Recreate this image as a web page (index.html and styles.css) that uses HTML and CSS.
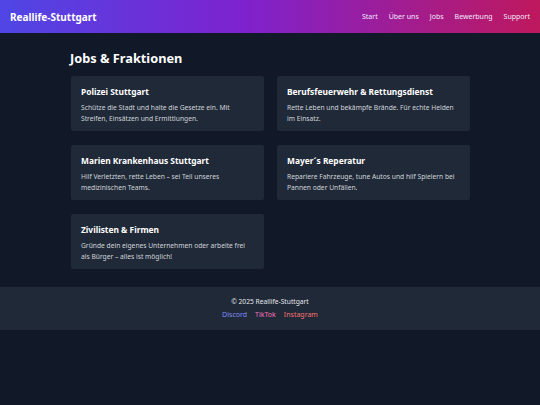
FILE: index.html
```html
<!DOCTYPE html>
<html lang="de">
<head>
<meta charset="utf-8">
<title>Reallife-Stuttgart</title>
<link rel="stylesheet" href="styles.css">
</head>
<body>
<header class="topbar">
  <div class="brand">Reallife-Stuttgart</div>
  <nav class="nav">
    <a href="#">Start</a>
    <a href="#">Über uns</a>
    <a href="#">Jobs</a>
    <a href="#">Bewerbung</a>
    <a href="#">Support</a>
  </nav>
</header>
<main class="container">
  <h1 class="title">Jobs &amp; Fraktionen</h1>
  <div class="grid">
    <div class="card">
      <h2>Polizei Stuttgart</h2>
      <p>Schütze die Stadt und halte die Gesetze ein. Mit Streifen, Einsätzen und Ermittlungen.</p>
    </div>
    <div class="card">
      <h2>Berufsfeuerwehr &amp; Rettungsdienst</h2>
      <p>Rette Leben und bekämpfe Brände. Für echte Helden im Einsatz.</p>
    </div>
    <div class="card">
      <h2>Marien Krankenhaus Stuttgart</h2>
      <p>Hilf Verletzten, rette Leben – sei Teil unseres medizinischen Teams.</p>
    </div>
    <div class="card">
      <h2>Mayer´s Reperatur</h2>
      <p>Repariere Fahrzeuge, tune Autos und hilf Spielern bei Pannen oder Unfällen.</p>
    </div>
    <div class="card">
      <h2>Zivilisten &amp; Firmen</h2>
      <p>Gründe dein eigenes Unternehmen oder arbeite frei als Bürger – alles ist möglich!</p>
    </div>
  </div>
</main>
<footer class="footer">
  <p class="copy">© 2025 Reallife-Stuttgart</p>
  <div class="links">
    <a href="#" class="discord">Discord</a>
    <a href="#" class="tiktok">TikTok</a>
    <a href="#" class="insta">Instagram</a>
  </div>
</footer>
</body>
</html>
```
FILE: styles.css
```css
* { box-sizing: border-box; }
html, body {
  margin: 0;
  padding: 0;
  background: #111827;
  color: #e5e7eb;
  font-family: "Noto Sans", "Open Sans", sans-serif;
}
a { text-decoration: none; }
.topbar {
  height: 33px;
  display: flex;
  align-items: center;
  justify-content: space-between;
  padding: 0 10px;
  background: linear-gradient(90deg, #4f46e5 0%, #7e22ce 45%, #be185d 100%);
}
.brand {
  color: #fff;
  font-weight: 700;
  font-size: 10px;
}
.nav {
  display: flex;
  gap: 11px;
}
.nav a {
  color: #f3e8ff;
  font-size: 7px;
}
.container {
  width: 400px;
  margin: 0 auto;
  padding: 16px 0 18px;
}
.title {
  margin: 0 0 9px;
  font-size: 12.75px;
  line-height: 18px;
  font-weight: 700;
  color: #fff;
}
.grid {
  display: grid;
  grid-template-columns: 193px 193px;
  column-gap: 13px;
  row-gap: 14px;
  padding-left: 1px;
}
.card {
  background: #1f2937;
  border-radius: 2px;
  padding: 10px 10px 9px;
  height: 55px;
}
.card h2 {
  margin: 0 0 4px;
  font-size: 8.4px;
  font-weight: 700;
  color: #fff;
  line-height: 12px;
}
.card p {
  margin: 0;
  font-size: 6.7px;
  line-height: 11px;
  color: #d1d5db;
}
.footer {
  background: #1f2937;
  height: 43px;
  padding-top: 10px;
  text-align: center;
}
.copy {
  margin: 0;
  font-size: 6.7px;
  line-height: 10px;
  color: #e5e7eb;
}
.links {
  margin-top: 3px;
  display: flex;
  justify-content: center;
  gap: 8px;
  font-size: 7px;
  line-height: 10px;
}
.discord { color: #818cf8; }
.tiktok { color: #f472b6; }
.insta { color: #f87171; }
```
